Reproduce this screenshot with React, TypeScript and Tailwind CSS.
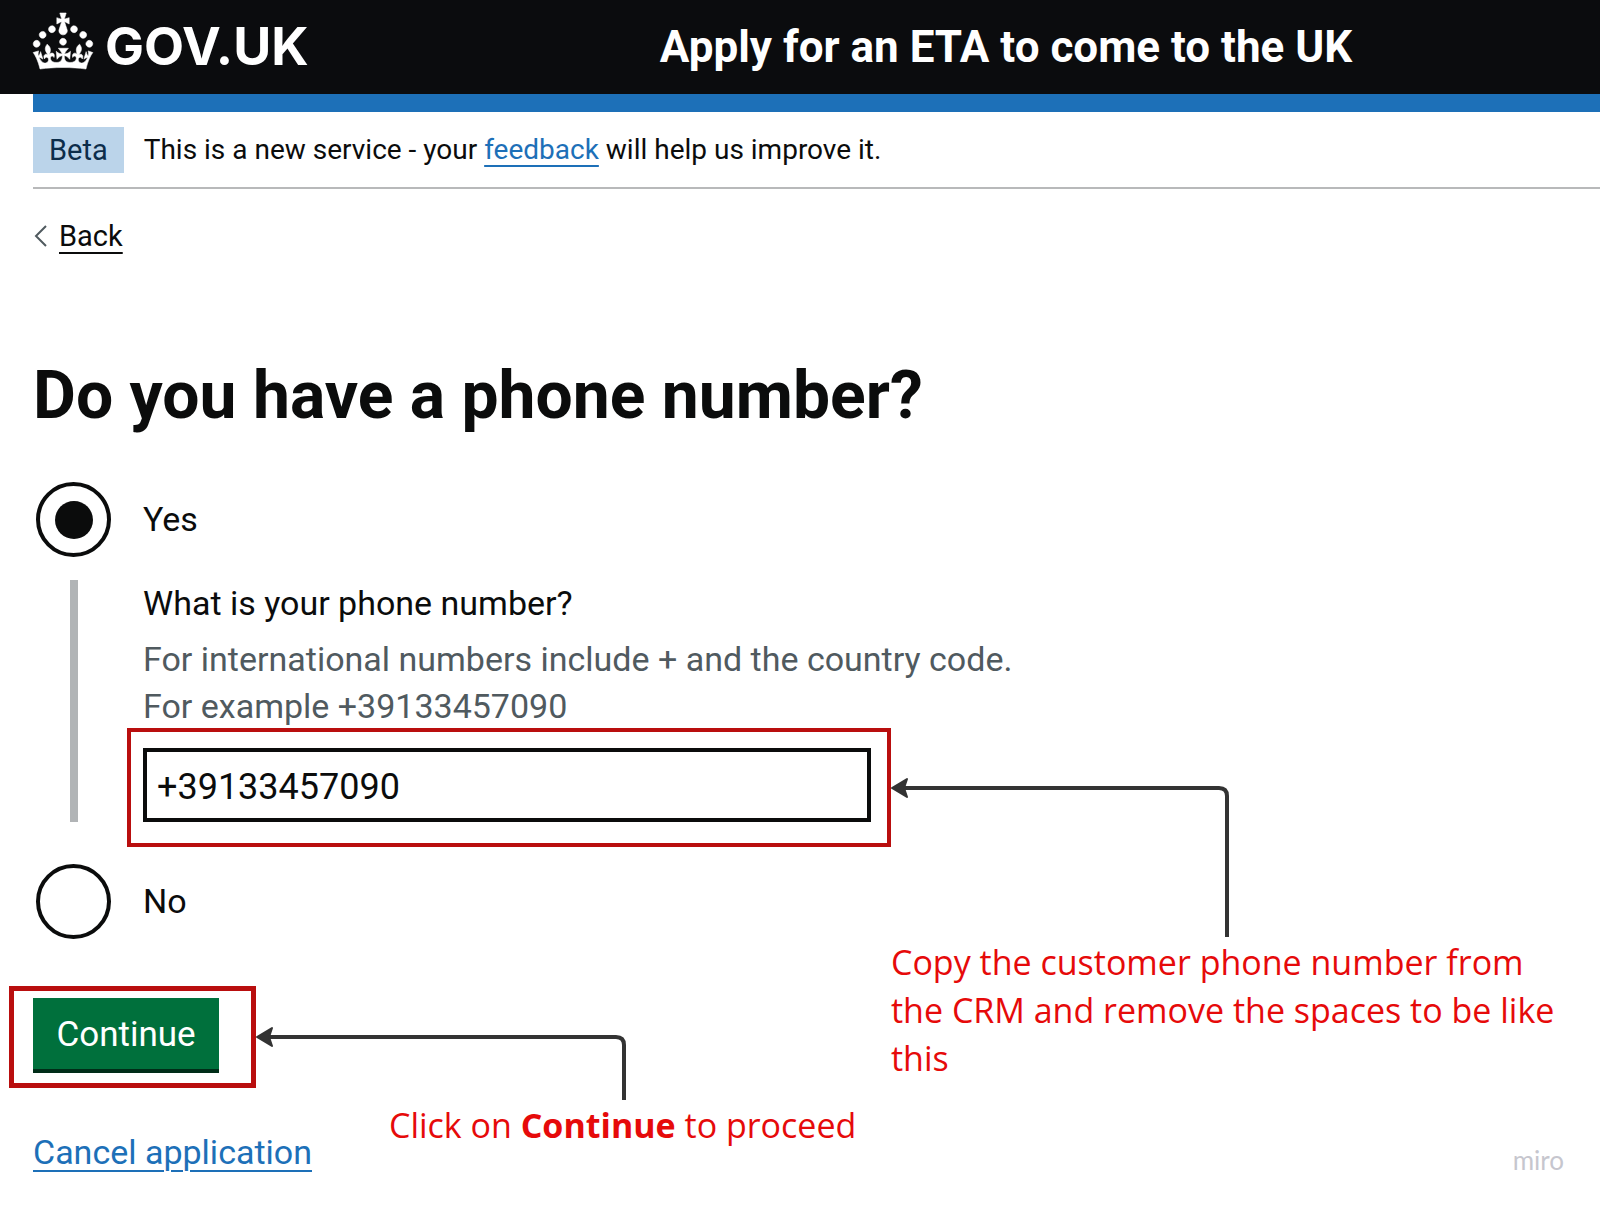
import React, { useState } from "react";

const crown =
  "M22.6 10.4c-1 .4-2-.1-2.4-1-.4-.9.1-2 1-2.4.9-.4 2 .1 2.4 1s-.1 2-1 2.4m-5.9 6.7c-.9.4-2-.1-2.4-1-.4-.9.1-2 1-2.4.9-.4 2 .1 2.4 1s-.1 2-1 2.4m10.8-3.7c-1 .4-2-.1-2.4-1-.4-.9.1-2 1-2.4.9-.4 2 .1 2.4 1s0 2-1 2.4m3.3 4.8c-1 .4-2-.1-2.4-1-.4-.9.1-2 1-2.4.9-.4 2 .1 2.4 1s-.1 2-1 2.4M17 4.7l2.3 1.2V2.5l-2.3.7-.2-.2.9-3h-3.4l.9 3-.2.2c-.1.1-2.3-.7-2.3-.7v3.4L15 4.7c.1.1.1.2.2.2l-1.3 4c-.1.2-.1.4-.1.6 0 1.1.8 2 1.9 2.2h.7c1-.2 1.9-1.1 1.9-2.1 0-.2 0-.4-.1-.6l-1.3-4c-.1-.2 0-.2.1-.3m-7.6 5.7c.9.4 2-.1 2.4-1 .4-.9-.1-2-1-2.4-.9-.4-2 .1-2.4 1s0 2 1 2.4m-5 3c.9.4 2-.1 2.4-1 .4-.9-.1-2-1-2.4-.9-.4-2 .1-2.4 1s.1 2 1 2.4m-3.2 4.8c.9.4 2-.1 2.4-1 .4-.9-.1-2-1-2.4-.9-.4-2 .1-2.4 1s0 2 1 2.4m14.8 11c4.4 0 8.6.3 12.3.8 1.1-4.5 2.4-7 3.7-8.8l-2.5-.9c.2 1.3.3 1.9 0 2.7-.4-.4-.8-1.1-1.1-2.3l-1.2 4c.7-.5 1.3-.8 2-.9-1.1 2.5-2.6 3.1-3.5 3-1.1-.2-1.7-1.2-1.5-2.1.3-1.2 1.5-1.5 2.1-.1 1.1-2.3-.8-3-2-2.3 1.9-1.9 2.1-3.5.6-5.6-2.1 1.6-2.1 3.2-1.2 5.5-1.2-1.4-3.2-.6-2.5 1.6.9-1.4 2.1-.5 1.9.8-.2 1.1-1.7 2.1-3.5 1.9-2.7-.2-2.9-2.1-2.9-3.6.7-.1 1.9.5 2.9 1.9l.4-4.3c-1.1 1.1-2.1 1.4-3.2 1.4.4-1.2 2.1-3 2.1-3h-5.4s1.7 1.9 2.1 3c-1.1 0-2.1-.2-3.2-1.4l.4 4.3c1-1.4 2.2-2 2.9-1.9-.1 1.5-.2 3.4-2.9 3.6-1.9.2-3.4-.8-3.5-1.9-.2-1.3 1-2.2 1.9-.8.7-2.3-1.2-3-2.5-1.6.9-2.2.9-3.9-1.2-5.5-1.5 2-1.3 3.7.6 5.6-1.2-.7-3.1 0-2 2.3.6-1.4 1.8-1.1 2.1.1.2.9-.3 1.9-1.5 2.1-.9.2-2.4-.5-3.5-3 .6 0 1.2.3 2 .9l-1.2-4c-.3 1.1-.7 1.9-1.1 2.3-.3-.8-.2-1.4 0-2.7l-2.9.9C1.3 23 2.6 25.5 3.7 30c3.7-.5 7.9-.8 12.3-.8";

/* Elbow connector: the arrow head touches the left edge, the tail drops at the right. */
function Connector({ width, height }: { width: number; height: number }) {
  const x = width - 2;
  return (
    <svg width={width} height={height} viewBox={`0 0 ${width} ${height}`} fill="none" aria-hidden="true">
      <path d={`M12 11H${x - 8}Q${x} 11 ${x} 19V${height}`} stroke="#333333" strokeWidth="4" />
      <path d="M1 11L16 2L13 11L16 20Z" fill="#333333" stroke="#333333" strokeWidth="2" strokeLinejoin="round" />
    </svg>
  );
}

function Radio({ value, label, checked, onChange }: { value: string; label: string; checked: boolean; onChange: () => void }) {
  return (
    <div className="flex items-center gap-8 pl-[3px]">
      <input
        id={value}
        type="radio"
        name="has-phone"
        value={value}
        checked={checked}
        onChange={onChange}
        className="grid size-[75px] shrink-0 appearance-none place-content-center rounded-full border-4 border-[#0b0c0c] bg-white before:size-[38px] before:rounded-full checked:before:bg-[#0b0c0c]"
      />
      <label htmlFor={value} className="text-[34px] leading-[47px]">
        {label}
      </label>
    </div>
  );
}

export default function App() {
  const [choice, setChoice] = useState("yes");
  const [phone, setPhone] = useState("+39133457090");

  return (
    <div className="relative min-h-screen overflow-x-hidden bg-white font-['Roboto',sans-serif] text-[#0b0c0c]">
      <header className="flex h-[94px] items-center bg-[#0b0c0e] pl-[33px] text-white">
        <a href="#home" className="flex w-2/5 shrink-0 items-center gap-3">
          <svg
            width="60"
            height="56"
            viewBox="0 0 32 30"
            fill="currentColor"
            stroke="currentColor"
            strokeWidth="0.3"
            className="mb-3 overflow-visible"
            aria-hidden="true"
          >
            <path d={crown} />
          </svg>
          <span className="font-['Inter',sans-serif] text-[52px] leading-[94px] font-bold">GOV.UK</span>
        </a>
        <a href="#service" className="text-[44px] leading-[94px] font-bold whitespace-nowrap">
          Apply for an ETA to come to the UK
        </a>
      </header>

      <main className="pl-[33px]">
        <div className="h-[18px] bg-[#1d70b8]" />
        <div className="flex items-center gap-5 border-b-2 border-[#b8b9ba] pt-[15px] pb-[14px]">
          <strong className="bg-[#bbd4ea] px-4 text-[29px] leading-[46px] font-normal text-[#0c2d4a]">Beta</strong>
          <p className="text-[28px] leading-[46px]">
            This is a new service - your{" "}
            <a href="#feedback" className="text-[#1d70b8] underline decoration-2 underline-offset-[6px]">
              feedback
            </a>{" "}
            will help us improve it.
          </p>
        </div>

        <a href="#back" className="mt-6 flex w-fit items-center gap-3 text-[29px] leading-[46px]">
          <svg width="14" height="22" viewBox="0 0 14 22" fill="none" stroke="#505a5f" strokeWidth="2" aria-hidden="true">
            <path d="M13 1L3 11L13 21" />
          </svg>
          <span className="underline decoration-2 underline-offset-[6px]">Back</span>
        </a>

        <form onSubmit={(e) => e.preventDefault()}>
          <fieldset>
            <legend className="pt-[97px] text-[66px] leading-20 font-bold">
              <h1>Do you have a phone number?</h1>
            </legend>

            <div className="mt-[46px]">
              <Radio value="yes" label="Yes" checked={choice === "yes"} onChange={() => setChoice("yes")} />
            </div>

            <div className="mt-[23px] ml-[37px] border-l-8 border-[#b1b4b6] pl-[65px]">
              <label htmlFor="phone" className="block text-[34px] leading-[47px]">
                What is your phone number?
              </label>
              <p id="phone-hint" className="mt-[9px] text-[34px] leading-[47px] text-[#505a5f]">
                For international numbers include + and the country code.
                <br />
                For example +39133457090
              </p>
              <div className="relative mt-[18px] w-[728px]">
                <input
                  id="phone"
                  type="tel"
                  aria-describedby="phone-hint"
                  value={phone}
                  onChange={(e) => setPhone(e.target.value)}
                  className="block h-[74px] w-full border-4 border-[#0b0c0c] bg-white px-[10px] pt-1 text-[36px]"
                />
                <div className="pointer-events-none absolute -top-5 -right-5 -bottom-[25px] -left-4 border-4 border-[#b90e0e]">
                  <div className="absolute top-[45px] left-full ml-1">
                    <Connector width={338} height={160} />
                    <p className="mt-px w-[670px] font-['Open_Sans',sans-serif] text-[34px] leading-12 text-[#e60a0a]">
                      Copy the customer phone number from the CRM and remove the spaces to be like this
                    </p>
                  </div>
                </div>
              </div>
            </div>

            <div className="mt-[42px]">
              <Radio value="no" label="No" checked={choice === "no"} onChange={() => setChoice("no")} />
            </div>
          </fieldset>

          <div className="relative mt-[59px] w-fit">
            <button type="submit" className="block h-[75px] w-[186px] border-b-4 border-[#002d18] bg-[#00703c] pt-1 text-[35px] text-white">
              Continue
            </button>
            <div className="pointer-events-none absolute -top-3 -right-[37px] -bottom-[15px] -left-6 border-5 border-[#b90e0e]">
              <div className="absolute top-[35px] left-full ml-[5px]">
                <Connector width={370} height={74} />
                <p className="mt-px ml-[133px] font-['Open_Sans',sans-serif] text-[34px] leading-12 whitespace-nowrap text-[#e60a0a]">
                  Click on <strong>Continue</strong> to proceed
                </p>
              </div>
            </div>
          </div>
        </form>

        <a
          href="#cancel"
          className="mt-14 block w-fit text-[34px] leading-[47px] text-[#1d70b8] underline decoration-2 underline-offset-[6px]"
        >
          Cancel application
        </a>
      </main>

      <span className="absolute right-9 bottom-8 font-['Lato',sans-serif] text-[26px] leading-7 text-[#c6c6ce]">miro</span>
    </div>
  );
}
